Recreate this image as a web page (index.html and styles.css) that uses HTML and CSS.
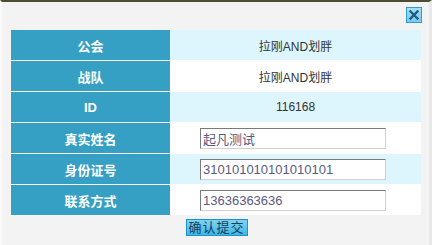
FILE: index.html
```html
<!DOCTYPE html>
<html lang="zh">
<head>
<meta charset="utf-8">
<link rel="stylesheet" href="styles.css">
</head>
<body>
<div class="dialog">
  <div class="topbar">
    <span class="close">
      <svg width="14" height="14" viewBox="0 0 14 14"><path d="M3.5 3.5 L10.5 10.5 M10.5 3.5 L3.5 10.5" stroke="#1d5f86" stroke-width="2.4" stroke-linecap="square"/></svg>
    </span>
  </div>
  <div class="grid">
    <div class="row alt"><div class="label">公会</div><div class="value">拉刚AND划胖</div></div>
    <div class="row"><div class="label">战队</div><div class="value">拉刚AND划胖</div></div>
    <div class="row alt"><div class="label">ID</div><div class="value">116168</div></div>
    <div class="row"><div class="label">真实姓名</div><div class="field"><input class="inp" value="起凡测试"></div></div>
    <div class="row alt"><div class="label">身份证号</div><div class="field"><input class="inp" value="310101010101010101"></div></div>
    <div class="row"><div class="label">联系方式</div><div class="field"><input class="inp" value="13636363636"></div></div>
  </div>
  <div class="actions"><button class="submit">确认提交</button></div>
</div>
</body>
</html>
```
FILE: styles.css
```css
html, body {
  margin: 0;
  padding: 0;
  background: #f3f3f3;
}
.dialog {
  width: 432px;
  height: 245px;
  box-sizing: border-box;
  border-top: 2px solid #4d4d33;
  border-left: 2px solid #fafafa;
  border-right: 3px solid #e8e8e8;
  background: #f3f3f3;
  font-family: "Liberation Sans", "Noto Sans CJK SC", sans-serif;
}
.topbar {
  height: 28px;
  display: flex;
  justify-content: flex-end;
  align-items: flex-start;
  padding-right: 7px;
  box-sizing: border-box;
  padding-top: 5px;
}
.close {
  width: 14px;
  height: 14px;
  border: 1px solid #25a0d8;
  background: linear-gradient(#a9def5, #7cc9ec);
  display: flex;
}
.grid {
  margin-left: 9px;
  width: 410px;
  display: flex;
  flex-direction: column;
  gap: 1px;
  background: #ffffff;
}
.row {
  display: grid;
  grid-template-columns: 159px 251px;
  height: 30px;
  background: #ffffff;
}
.row.alt {
  background: #ddf6fd;
}
.label {
  background: #35a0c3;
  color: #ffffff;
  font-weight: bold;
  font-size: 13px;
  display: flex;
  align-items: center;
  justify-content: center;
}
.value {
  font-size: 12px;
  color: #333333;
  display: flex;
  align-items: center;
  justify-content: center;
}
.field {
  display: flex;
  align-items: center;
  padding-left: 30px;
}
.inp {
  width: 186px;
  height: 21px;
  box-sizing: border-box;
  border-style: solid;
  border-width: 1px;
  border-color: #7a7a7a #d4d0c8 #d4d0c8 #7a7a7a;
  padding: 0 2px;
  font-family: "Liberation Sans", "Noto Sans CJK SC", sans-serif;
  font-size: 13px;
  color: #5a5a80;
  background: #ffffff;
  outline: none;
}
.actions {
  display: flex;
  justify-content: center;
  padding-top: 4px;
  padding-left: 2px;
}
.submit {
  width: 62px;
  height: 17px;
  padding: 0;
  border: 1px solid #1a93cf;
  background: linear-gradient(#7fd3f1, #3fb6e6);
  color: #15405e;
  font-family: "Liberation Sans", "Noto Sans CJK SC", sans-serif;
  font-size: 13px;
  line-height: 15px;
  letter-spacing: 1px;
}
```
